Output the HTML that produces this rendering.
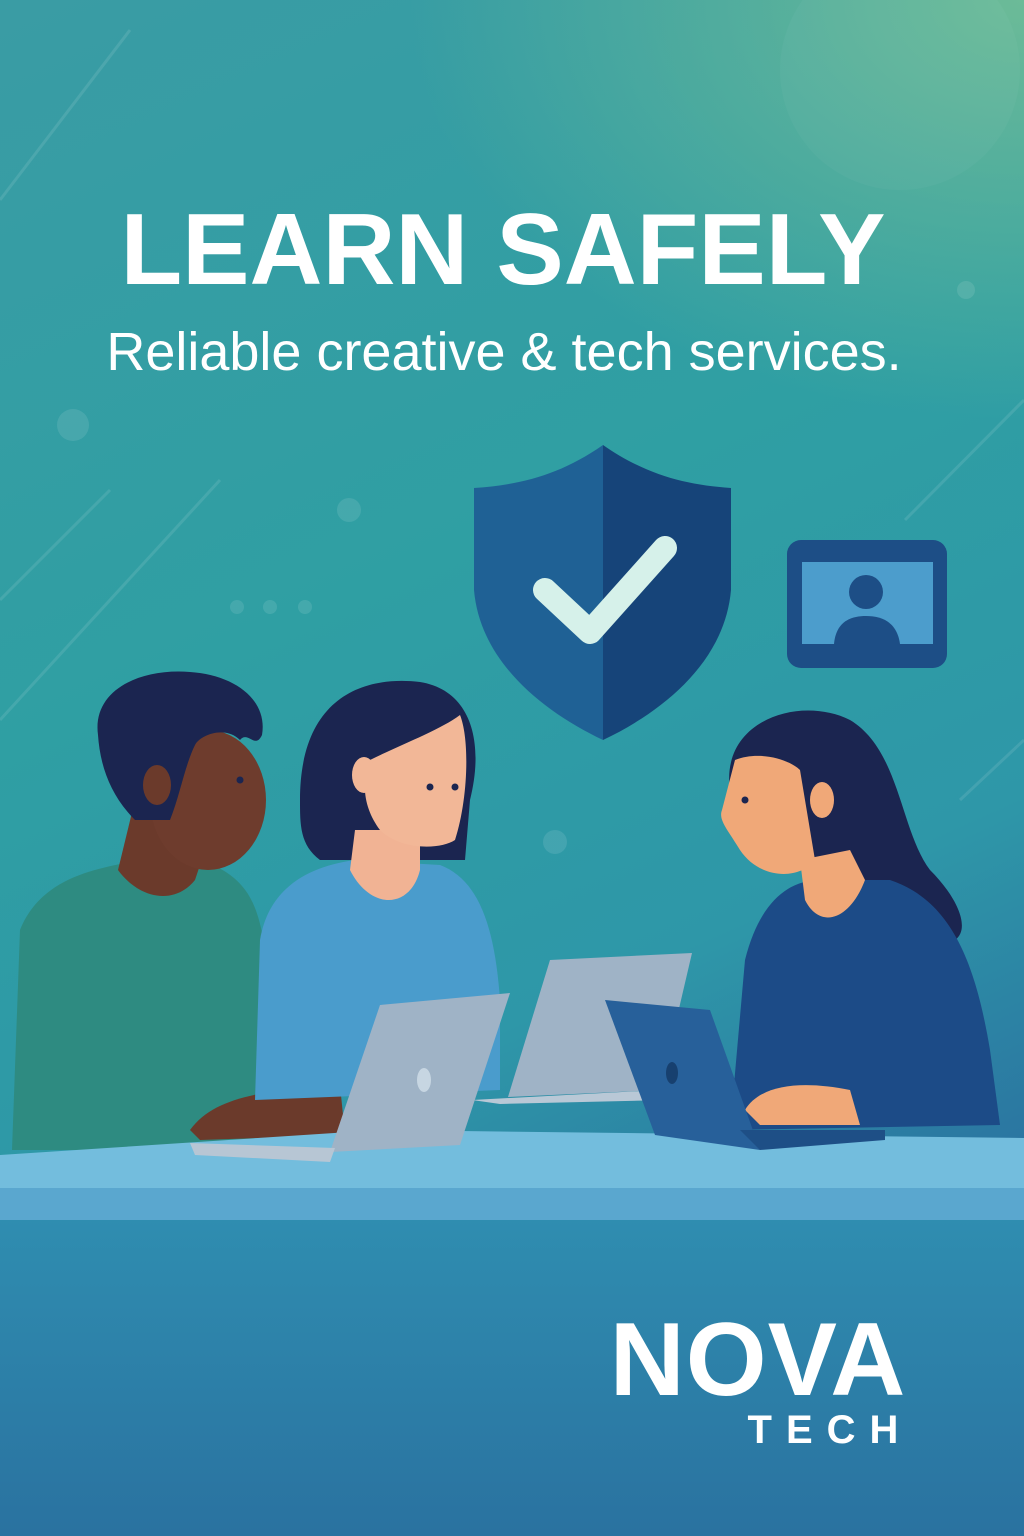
<!DOCTYPE html>
<html><head><meta charset="utf-8"><style>
html,body{margin:0;padding:0}
body{width:1024px;height:1536px;overflow:hidden;font-family:"Liberation Sans",sans-serif}
svg{display:block}
</style></head><body>
<svg width="1024" height="1536" viewBox="0 0 1024 1536" xmlns="http://www.w3.org/2000/svg">
<defs>
<linearGradient id="bg" x1="0" y1="0" x2="0.3" y2="1">
<stop offset="0" stop-color="#3a9ca4"/>
<stop offset="0.45" stop-color="#2f9fa3"/>
<stop offset="0.75" stop-color="#2e97a8"/>
<stop offset="1" stop-color="#2a6fa0"/>
</linearGradient>
<radialGradient id="tr" cx="1" cy="0" r="0.6">
<stop offset="0" stop-color="#6cbb98"/>
<stop offset="1" stop-color="#6cbb98" stop-opacity="0"/>
</radialGradient>
<linearGradient id="bot" x1="0" y1="0" x2="0" y2="1">
<stop offset="0" stop-color="#2f8db0"/>
<stop offset="1" stop-color="#2a72a0"/>
</linearGradient>
</defs>
<rect width="1024" height="1536" fill="url(#bg)"/>
<rect width="1024" height="700" fill="url(#tr)"/>
<circle cx="900" cy="70" r="120" fill="#ffffff" opacity="0.03"/>
<g stroke="#ffffff" stroke-opacity="0.1" stroke-width="3">
<line x1="0" y1="200" x2="130" y2="30"/><line x1="0" y1="600" x2="110" y2="490"/>
<line x1="0" y1="720" x2="220" y2="480"/><line x1="905" y1="520" x2="1024" y2="400"/>
<line x1="960" y1="800" x2="1024" y2="740"/><line x1="100" y1="1440" x2="260" y2="1280"/>
</g>
<g fill="#ffffff" opacity="0.1">
<circle cx="73" cy="425" r="16"/><circle cx="349" cy="510" r="12"/><circle cx="237" cy="607" r="7"/>
<circle cx="270" cy="607" r="7"/><circle cx="305" cy="607" r="7"/><circle cx="966" cy="290" r="9"/>
<circle cx="68" cy="1323" r="12"/><circle cx="555" cy="842" r="12"/>
</g>
<text x="503" y="284" text-anchor="middle" fill="#fff" font-size="101" font-weight="bold">LEARN SAFELY</text>
<text x="504" y="370" text-anchor="middle" fill="#fff" font-size="54">Reliable creative &amp; tech services.</text>
<!-- shield -->
<path d="M603 445 C560 475 520 485 474 488 L474 590 C480 660 540 710 603 740 Z" fill="#1f6195"/>
<path d="M603 445 C646 475 686 485 731 488 L731 590 C725 660 666 710 603 740 Z" fill="#164479"/>
<path d="M545 590 L590 632 L665 548" fill="none" stroke="#d6f1ea" stroke-width="24" stroke-linecap="round" stroke-linejoin="round"/>
<!-- monitor -->
<rect x="787" y="540" width="160" height="128" rx="14" fill="#1d4e86"/>
<rect x="802" y="562" width="131" height="82" fill="#4c9dcc"/>
<circle cx="866" cy="592" r="17" fill="#1d4e86"/>
<path d="M834 644 C836 622 850 616 866 616 C882 616 897 622 900 644 Z" fill="#1d4e86"/>
<!-- bottom -->
<rect x="0" y="1220" width="1024" height="316" fill="url(#bot)"/>
<!-- person 1 -->
<path d="M12 1150 L20 930 C40 880 90 870 130 862 L200 860 C260 880 260 920 270 980 L300 1090 L330 1150 Z" fill="#2e8b81"/>
<path d="M118 870 L135 800 L215 820 L195 880 C175 905 140 900 118 870 Z" fill="#6b3a2b"/>
<ellipse cx="208" cy="800" rx="58" ry="70" fill="#6e3c2d"/>
<path d="M98 735 C92 690 140 668 190 672 C235 675 268 700 262 735 C255 750 248 730 240 740 C225 725 200 735 195 745 C185 765 180 795 170 820 L135 820 C110 795 100 765 98 735 Z" fill="#1b2550"/>
<ellipse cx="157" cy="785" rx="14" ry="20" fill="#6b3a2b"/>
<circle cx="240" cy="780" r="3.5" fill="#1b2550"/>
<path d="M190 1130 C215 1095 270 1090 340 1085 L345 1135 L200 1140 Z" fill="#6b3a2b"/>
<!-- person 2 -->
<path d="M300 800 C300 700 360 675 420 682 C470 690 485 740 470 800 L465 860 L320 860 C300 845 300 825 300 800 Z" fill="#1b2550"/>
<path d="M255 1100 L260 940 C270 880 320 865 355 860 L440 865 C480 880 495 930 500 1000 L500 1090 Z" fill="#4a9ccc"/>
<path d="M355 830 L350 870 C370 910 410 910 420 870 L420 830 Z" fill="#f1b394"/>
<path d="M370 760 C400 745 440 730 460 715 C470 740 468 800 455 840 C440 850 400 850 380 830 C365 810 360 785 370 760 Z" fill="#f2b797"/>
<ellipse cx="364" cy="775" rx="12" ry="18" fill="#f2b797"/>
<circle cx="430" cy="787" r="3.5" fill="#1b2550"/><circle cx="455" cy="787" r="3.5" fill="#1b2550"/>
<!-- laptop 2 -->
<path d="M550 960 L692 953 L660 1090 L508 1097 Z" fill="#9fb3c6"/>
<path d="M472 1100 L660 1090 L665 1100 L500 1104 Z" fill="#b9c8d6"/>
<!-- person 3 -->
<path d="M730 790 C720 720 800 695 850 720 C900 750 900 830 930 870 C960 900 970 930 955 940 L850 920 Z" fill="#1b2550"/>
<path d="M730 1130 L745 960 C760 900 790 880 820 880 L890 880 C950 900 975 960 990 1050 L1000 1125 Z" fill="#1c4b87"/>
<path d="M800 860 L805 900 C820 930 850 920 865 880 L850 850 Z" fill="#f0a878"/>
<path d="M735 760 C760 750 790 760 800 770 L815 860 C800 880 760 880 740 850 C728 830 718 820 722 810 Z" fill="#f0a878"/>
<ellipse cx="822" cy="800" rx="12" ry="18" fill="#f0a878"/>
<circle cx="745" cy="800" r="3.5" fill="#1b2550"/>
<path d="M745 1110 C760 1085 800 1080 850 1090 L860 1125 L760 1125 Z" fill="#f0a878"/>
<!-- table -->
<path d="M0 1155 L380 1130 L1024 1138 L1024 1190 L0 1190 Z" fill="#73bddd"/>
<rect x="0" y="1188" width="1024" height="32" fill="#5aa7cf"/>
<!-- laptop 1 -->
<path d="M380 1005 L510 993 L460 1145 L330 1152 Z" fill="#9fb3c6"/>
<path d="M190 1143 L335 1148 L330 1162 L195 1155 Z" fill="#b7c6d4"/>
<ellipse cx="424" cy="1080" rx="7" ry="12" fill="#c7d6e2"/>
<!-- laptop 3 -->
<path d="M605 1000 L710 1010 L760 1150 L655 1135 Z" fill="#27609a"/>
<path d="M740 1130 L885 1130 L885 1140 L760 1150 Z" fill="#1e4f86"/>
<ellipse cx="672" cy="1073" rx="6" ry="11" fill="#17406f"/>
<!-- logo -->
<text x="758" y="1395" text-anchor="middle" fill="#fff" font-size="104" font-weight="bold" letter-spacing="1">NOVA</text>
<text x="830" y="1443" text-anchor="middle" fill="#fff" font-size="40" font-weight="bold" letter-spacing="14">TECH</text>
</svg>
</body></html>
